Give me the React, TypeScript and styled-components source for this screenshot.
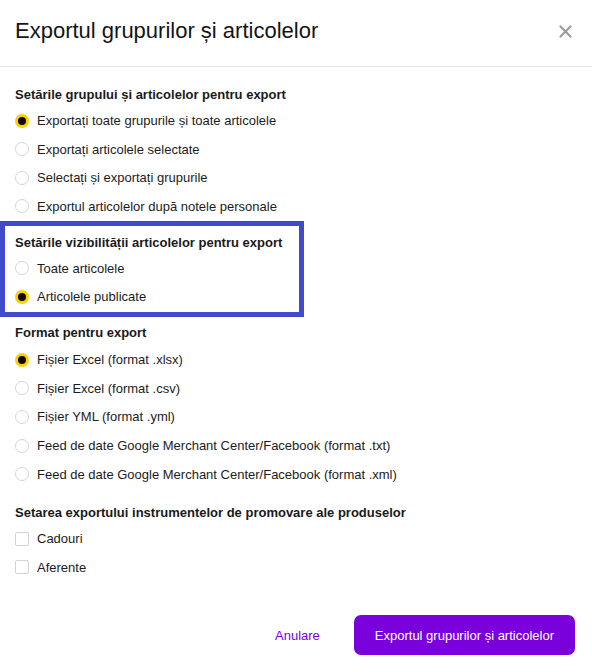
import React, { useState } from "react";
import styled, { createGlobalStyle } from "styled-components";

const Global = createGlobalStyle`
  * { box-sizing: border-box; }
  html, body { margin: 0; padding: 0; background: #ffffff; }
  body { font-family: "Liberation Sans", Arial, sans-serif; color: #1c1c1c; }
`;

const Dialog = styled.div`
  width: 592px;
  height: 672px;
  display: flex;
  flex-direction: column;
  background: #fff;
`;

const Header = styled.div`
  height: 67px;
  display: flex;
  align-items: center;
  justify-content: space-between;
  padding: 0 19px 4px 15px;
  border-bottom: 1px solid #e3e3e3;
`;

const Title = styled.h1`
  margin: 0;
  font-size: 22px;
  font-weight: 400;
  color: #141414;
`;

const CloseButton = styled.button`
  width: 16px;
  height: 16px;
  padding: 0;
  border: none;
  background: none;
  display: flex;
  align-items: center;
  justify-content: center;
  cursor: pointer;
`;

const Body = styled.div`
  flex: 1;
  display: flex;
  flex-direction: column;
  gap: 12px;
  padding: 18px 15px 0 15px;
`;

const Section = styled.div<{ $highlight?: boolean; $pushed?: boolean }>`
  display: flex;
  flex-direction: column;
  ${(p) => (p.$pushed ? "margin-top: 2.5px;" : "")}
  ${(p) =>
    p.$highlight
      ? `
    margin: -11.5px 0 -6.5px -15px;
    padding: 6.5px 0 0 10px;
    width: 304px;
    height: 96px;
    border: 5px solid #4349cc;
  `
      : ""}
`;

const Heading = styled.div<{ $loose?: boolean }>`
  height: 20px;
  line-height: 20px;
  margin-bottom: ${(p) => (p.$loose ? "3px" : "1.5px")};
  font-size: 13px;
  font-weight: 700;
  white-space: nowrap;
  color: #1a1a1a;
`;

const Row = styled.label<{ $loose?: boolean }>`
  height: ${(p) => (p.$loose ? "28.6px" : "28.5px")};
  display: flex;
  align-items: center;
  gap: 8px;
  font-size: 13px;
  white-space: nowrap;
  color: #1c1c1c;
  cursor: pointer;
`;

const RadioMark = styled.span<{ $checked: boolean }>`
  width: 14px;
  height: 14px;
  flex: none;
  border-radius: 50%;
  border: ${(p) => (p.$checked ? "3px solid #ffcf00" : "1px solid #d6d6d6")};
  background: ${(p) => (p.$checked ? "#0a0a0a" : "#fff")};
`;

const CheckMark = styled.span`
  width: 14px;
  height: 14px;
  flex: none;
  border: 1px solid #d3d3d3;
  border-radius: 2px;
  background: #fff;
`;

const Footer = styled.div`
  display: flex;
  justify-content: flex-end;
  align-items: center;
  gap: 34px;
  padding: 0 17px 17px 0;
`;

const LinkButton = styled.button`
  border: none;
  background: none;
  padding: 0;
  font-family: "Liberation Sans", Arial, sans-serif;
  font-size: 13px;
  color: #7a00dc;
  cursor: pointer;
`;

const PrimaryButton = styled.button`
  height: 40px;
  padding: 0 21px;
  border: none;
  border-radius: 7px;
  background: #7a00dc;
  color: #ffffff;
  font-family: "Liberation Sans", Arial, sans-serif;
  font-size: 13px;
  cursor: pointer;
`;

type Group = { key: string; title: string; options: string[]; highlight?: boolean; loose?: boolean };

const groups: Group[] = [
  {
    key: "scope",
    title: "Setările grupului și articolelor pentru export",
    options: [
      "Exportați toate grupurile și toate articolele",
      "Exportați articolele selectate",
      "Selectați și exportați grupurile",
      "Exportul articolelor după notele personale",
    ],
  },
  {
    key: "visibility",
    title: "Setările vizibilității articolelor pentru export",
    options: ["Toate articolele", "Articolele publicate"],
    highlight: true,
  },
  {
    key: "format",
    title: "Format pentru export",
    options: [
      "Fișier Excel (format .xlsx)",
      "Fișier Excel (format .csv)",
      "Fișier YML (format .yml)",
      "Feed de date Google Merchant Center/Facebook (format .txt)",
      "Feed de date Google Merchant Center/Facebook (format .xml)",
    ],
    loose: true,
  },
];

export default function App() {
  const [sel, setSel] = useState<Record<string, number>>({ scope: 0, visibility: 1, format: 0 });
  const [checks, setChecks] = useState<Record<string, boolean>>({ Cadouri: false, Aferente: false });

  return (
    <>
      <Global />
      <Dialog>
        <Header>
          <Title>Exportul grupurilor și articolelor</Title>
          <CloseButton aria-label="Închide">
            <svg width="13" height="13" viewBox="0 0 13 13">
              <path d="M1.5 1.5 L11.5 11.5 M11.5 1.5 L1.5 11.5" stroke="#9c9c9c" strokeWidth="2.2" strokeLinecap="round" />
            </svg>
          </CloseButton>
        </Header>
        <Body>
          {groups.map((g) => (
            <Section key={g.key} $highlight={g.highlight}>
              <Heading $loose={g.loose}>{g.title}</Heading>
              {g.options.map((o, i) => (
                <Row key={o} $loose={g.loose} onClick={() => setSel({ ...sel, [g.key]: i })}>
                  <RadioMark $checked={sel[g.key] === i} />
                  {o}
                </Row>
              ))}
            </Section>
          ))}
          <Section $pushed>
            <Heading>Setarea exportului instrumentelor de promovare ale produselor</Heading>
            {["Cadouri", "Aferente"].map((c) => (
              <Row key={c} onClick={() => setChecks({ ...checks, [c]: !checks[c] })}>
                <CheckMark />
                {c}
              </Row>
            ))}
          </Section>
        </Body>
        <Footer>
          <LinkButton>Anulare</LinkButton>
          <PrimaryButton>Exportul grupurilor și articolelor</PrimaryButton>
        </Footer>
      </Dialog>
    </>
  );
}
